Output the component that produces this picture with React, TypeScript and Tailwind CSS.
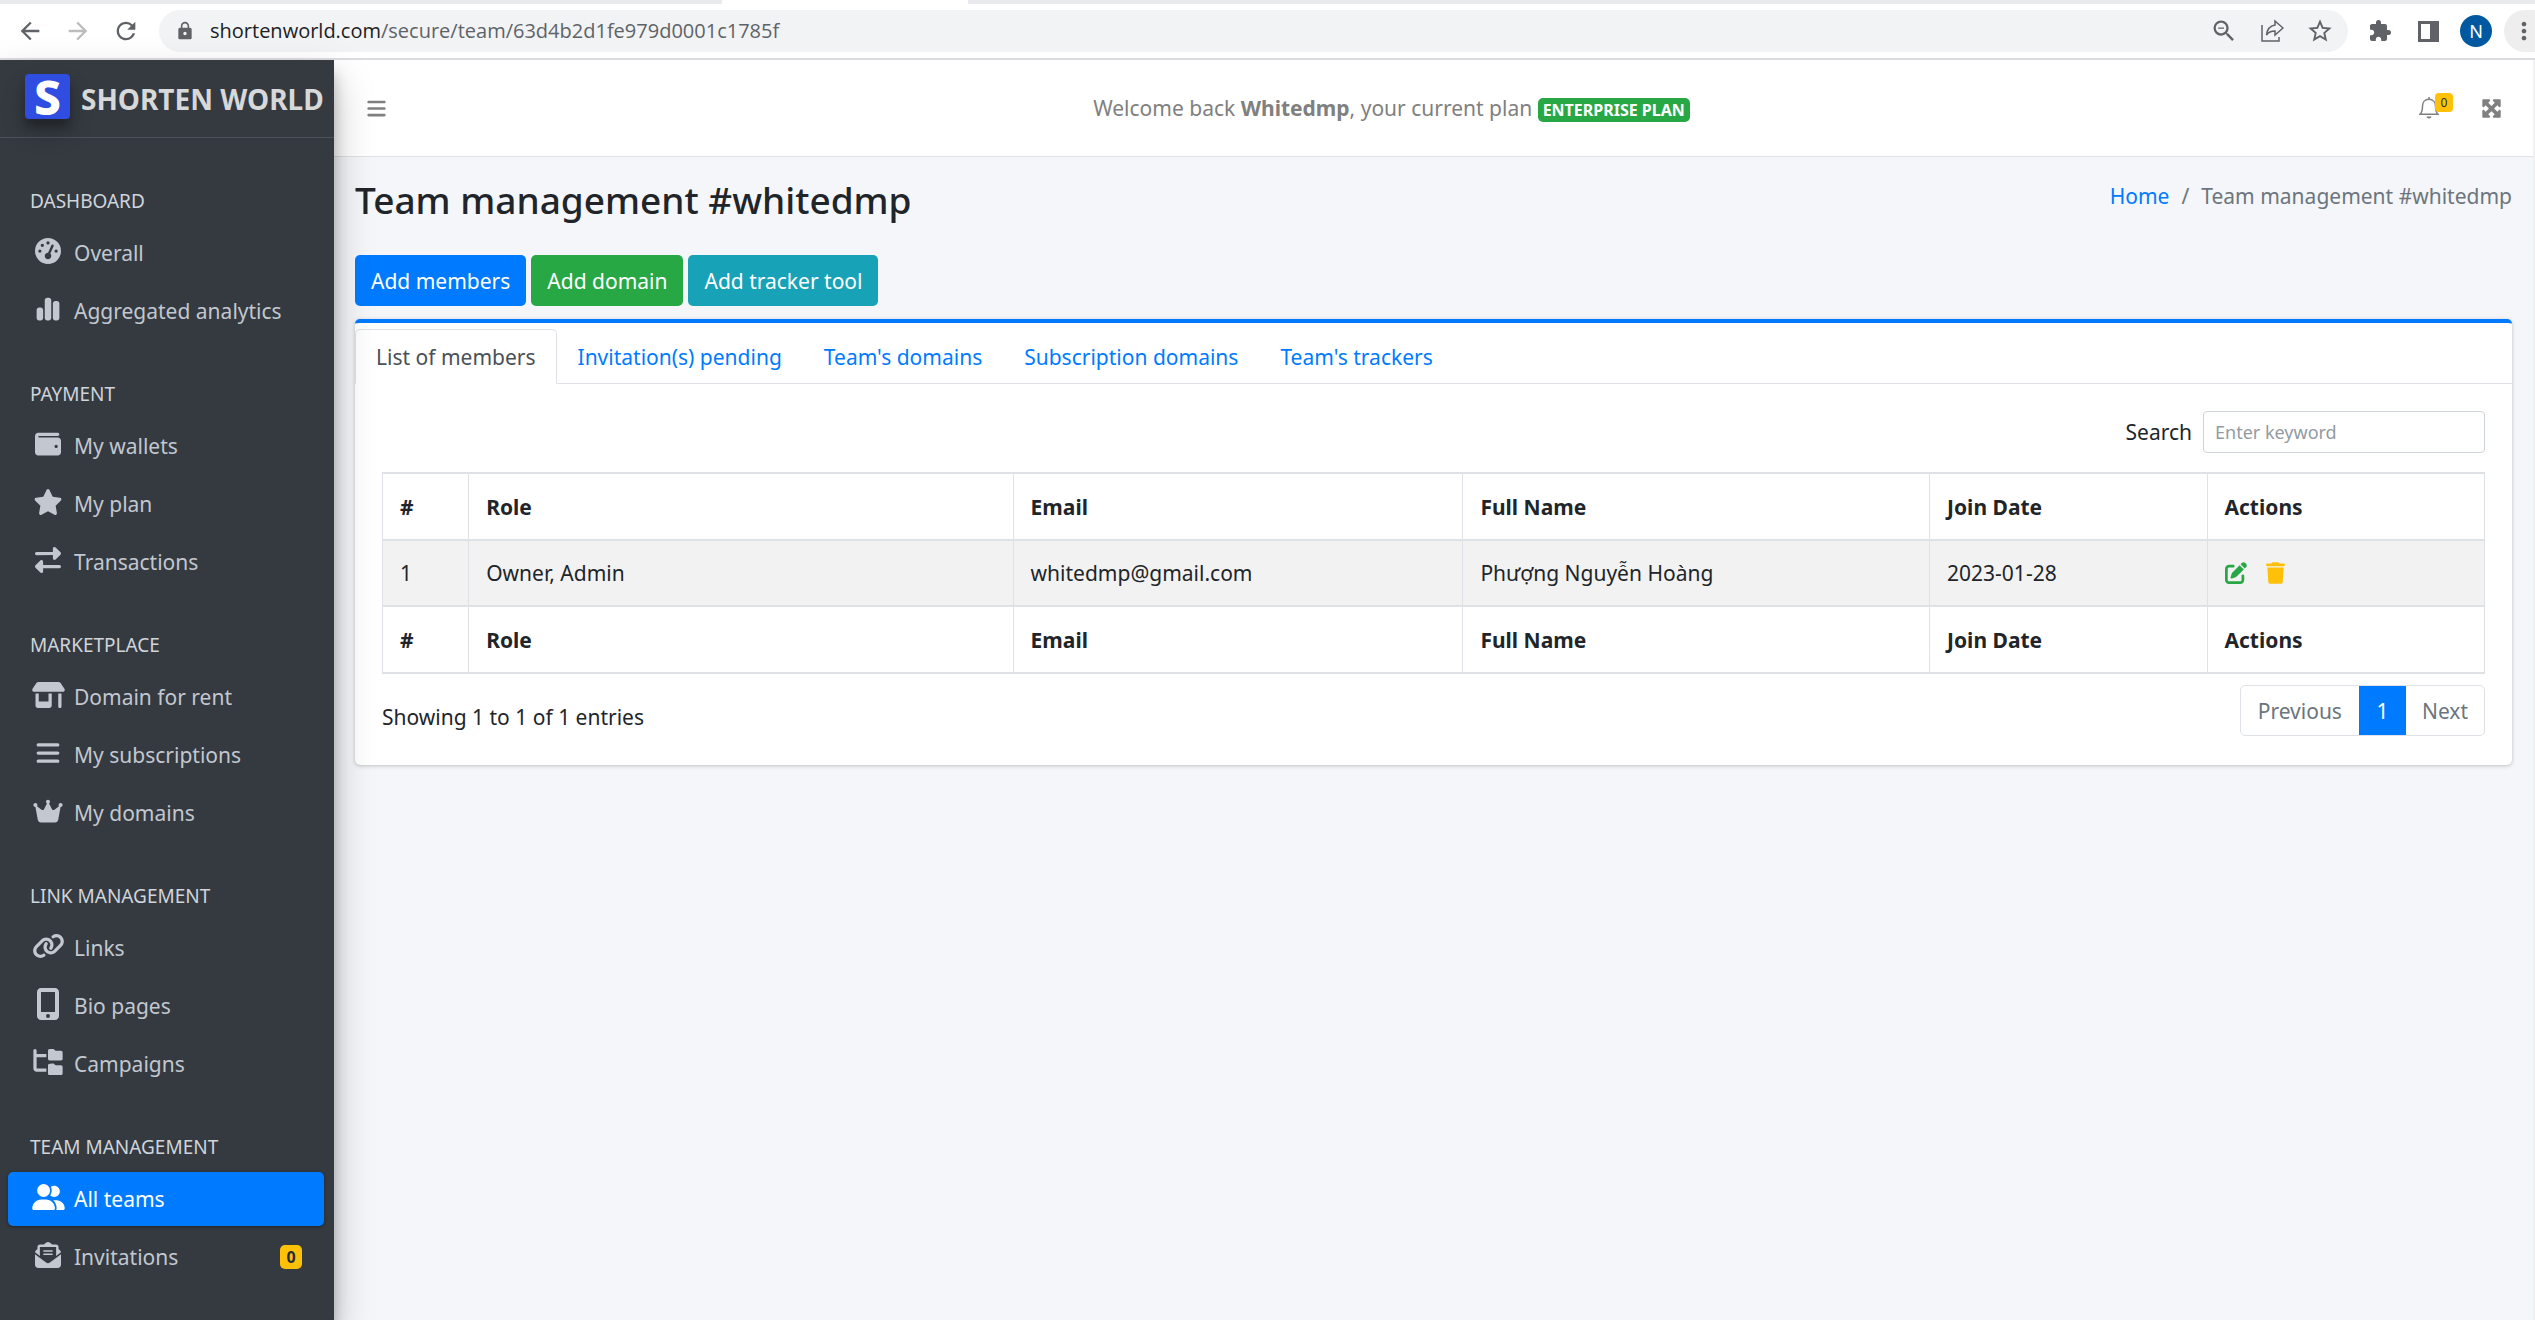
import type { ComponentType, ReactNode } from "react";
import {
  FaBars,
  FaChartSimple,
  FaCrown,
  FaEnvelopeOpenText,
  FaFolderTree,
  FaGaugeHigh,
  FaLink,
  FaMaximize,
  FaMobileScreenButton,
  FaPenToSquare,
  FaRightLeft,
  FaShop,
  FaStar,
  FaTrash,
  FaUserGroup,
  FaWallet,
} from "react-icons/fa6";
import {
  MdArrowBack,
  MdArrowForward,
  MdExtension,
  MdLock,
  MdMoreVert,
  MdRefresh,
  MdStarBorder,
  MdZoomOut,
} from "react-icons/md";

type Icon = ComponentType<{ className?: string }>;
type Item = { label: string; icon: Icon; size?: string; active?: boolean; badge?: string };

const WIDE = "h-[26px] w-[33px]";
const MEDIUM = "h-[26px] w-[30px]";

const NAV: { title: string; items: Item[] }[] = [
  {
    title: "DASHBOARD",
    items: [
      { label: "Overall", icon: FaGaugeHigh },
      { label: "Aggregated analytics", icon: FaChartSimple },
    ],
  },
  {
    title: "PAYMENT",
    items: [
      { label: "My wallets", icon: FaWallet },
      { label: "My plan", icon: FaStar, size: MEDIUM },
      { label: "Transactions", icon: FaRightLeft },
    ],
  },
  {
    title: "MARKETPLACE",
    items: [
      { label: "Domain for rent", icon: FaShop, size: WIDE },
      { label: "My subscriptions", icon: FaBars },
      { label: "My domains", icon: FaCrown, size: MEDIUM },
    ],
  },
  {
    title: "LINK MANAGEMENT",
    items: [
      { label: "Links", icon: FaLink, size: WIDE },
      { label: "Bio pages", icon: FaMobileScreenButton, size: "size-8" },
      { label: "Campaigns", icon: FaFolderTree, size: MEDIUM },
    ],
  },
  {
    title: "TEAM MANAGEMENT",
    items: [
      { label: "All teams", icon: FaUserGroup, size: WIDE, active: true },
      { label: "Invitations", icon: FaEnvelopeOpenText, badge: "0" },
    ],
  },
];

const TABS = ["List of members", "Invitation(s) pending", "Team's domains", "Subscription domains", "Team's trackers"];
const COLUMNS = ["#", "Role", "Email", "Full Name", "Join Date", "Actions"];
const MEMBERS = [
  { id: 1, role: "Owner, Admin", email: "whitedmp@gmail.com", name: "Phượng Nguyễn Hoàng", joined: "2023-01-28" },
];

function ToolButton({ label, className = "", children }: { label: string; className?: string; children: ReactNode }) {
  return (
    <button type="button" aria-label={label} className={`flex size-8 items-center justify-center ${className}`}>
      {children}
    </button>
  );
}

function BrowserBar() {
  return (
    <div className="shrink-0 border-b-2 border-[#dadce0] bg-white text-[#5f6368]">
      <div className="flex h-1 bg-[#e8eaed]">
        <div className="ml-[28.5%] w-[9.7%] bg-white" />
      </div>
      <div className="flex h-[54px] items-center pl-3.5">
        <div className="flex w-[145px] items-center gap-4">
          <ToolButton label="Back"><MdArrowBack className="size-7" /></ToolButton>
          <ToolButton label="Forward" className="text-[#babcbe]"><MdArrowForward className="size-7" /></ToolButton>
          <ToolButton label="Reload"><MdRefresh className="size-7" /></ToolButton>
        </div>
        <div className="flex h-[42px] flex-1 items-center rounded-full bg-[#f1f3f4] pl-4 pr-3">
          <MdLock className="size-5" />
          <span className="ml-[15px] flex-1 font-['Open_Sans',sans-serif] text-[20px] leading-none">
            <span className="text-[#202124]">shortenworld.com</span>/secure/team/63d4b2d1fe979d0001c1785f
          </span>
          <div className="flex gap-4">
            <ToolButton label="Zoom"><MdZoomOut className="size-7" /></ToolButton>
            <ToolButton label="Share">
              <svg viewBox="0 0 24 24" className="size-6" fill="none" stroke="currentColor" strokeWidth="1.5">
                <path d="M2 6v16h17v-4" />
                <path d="M15 2l8 7-8 7v-4c-4 0-6.500 1-8.500 4 .500-5 3-9 8.500-10z" />
              </svg>
            </ToolButton>
            <ToolButton label="Bookmark"><MdStarBorder className="size-7" /></ToolButton>
          </div>
        </div>
        <div className="flex items-center gap-4 pl-4">
          <ToolButton label="Extensions"><MdExtension className="size-6" /></ToolButton>
          <ToolButton label="Side panel">
            <span className="flex size-[21px] border-[3px] border-r-[9px] border-current" />
          </ToolButton>
          <ToolButton label="Profile">
            <span className="flex size-8 items-center justify-center rounded-full bg-[#0059a0] font-['Noto_Sans',sans-serif] text-[18px] text-white">
              N
            </span>
          </ToolButton>
        </div>
        <button type="button" aria-label="Menu" className="ml-3 flex h-[42px] w-[31px] items-center justify-center rounded-l-full bg-[#eeeeee]">
          <MdMoreVert className="ml-2 size-7 shrink-0" />
        </button>
      </div>
    </div>
  );
}

function Sidebar() {
  return (
    <aside className="z-10 w-[334px] shrink-0 bg-[#343a40] shadow-[0_19px_37px_rgba(0,0,0,0.25),0_13px_13px_rgba(0,0,0,0.22)]">
      <a href="#home" className="flex h-[78px] items-center gap-[11px] whitespace-nowrap border-b border-[#4b545c] pl-[25px] text-[28px] font-bold text-[#d6d8d9]">
        <span className="-mt-1 flex h-[45px] w-[45px] shrink-0 items-center justify-center rounded bg-[#2f4de0] text-[48px] font-extrabold leading-none text-white shadow-[0_13px_25px_rgba(0,0,0,0.19),0_8px_8px_rgba(0,0,0,0.23)]">
          S
        </span>
        SHORTEN WORLD
      </a>
      <nav className="pt-[11px]">
        {NAV.map((group) => (
          <section key={group.title}>
            <h2 className="pb-[9px] pl-[30px] pt-9 text-[19px] leading-8 text-[#d0d4db]">{group.title}</h2>
            <ul>
              {group.items.map((item) => (
                <li key={item.label} className="mb-1 px-2">
                  <a
                    href="#nav"
                    className={`mr-0.5 flex h-[54px] items-center rounded-[5px] pl-[23px] pr-[22px] ${
                      item.active
                        ? "bg-[#007bff] text-white shadow-[0_1px_4px_rgba(0,0,0,0.12),0_1px_3px_rgba(0,0,0,0.24)]"
                        : "text-[#c2c7d0]"
                    }`}
                  >
                    <span className="mb-1 flex w-[34px] shrink-0 justify-center">
                      <item.icon className={item.size ?? "size-[26px]"} />
                    </span>
                    <span className="ml-[9px] flex-1">{item.label}</span>
                    {item.badge && (
                      <span className="flex h-6 w-[22px] items-center justify-center rounded-[5px] bg-[#ffc107] text-[16px] font-bold text-[#1f2d3d]">
                        {item.badge}
                      </span>
                    )}
                  </a>
                </li>
              ))}
            </ul>
          </section>
        ))}
      </nav>
    </aside>
  );
}

function TopBar() {
  return (
    <header className="flex h-[97px] items-center border-b border-[#dee2e6] bg-white text-[#808080]">
      <button type="button" aria-label="Toggle menu" className="flex w-[66px] justify-end pr-[13px]">
        <FaBars className="size-[21px]" />
      </button>
      <p className="flex-1 text-center">
        Welcome back <b>Whitedmp</b>, your current plan{" "}
        <span className="inline-block rounded-[5px] bg-[#28a745] px-[5px] text-[16px] font-bold leading-6 text-white">
          ENTERPRISE PLAN
        </span>
      </p>
      <div className="flex w-[150px] items-center gap-[42px] pl-9">
        <button type="button" aria-label="Notifications" className="relative">
          <svg viewBox="0 0 20 22" className="h-[22px] w-5" fill="none" stroke="currentColor" strokeWidth="1.5">
            <path d="M10 0v2.500M1 17.300h18c-2-2-2.500-4-2.500-8 0-4-2.500-7-6.500-7s-6.500 3-6.500 7c0 4-.500 6-2.500 8z" />
            <path d="M7.500 19.500h5a2.500 2 0 0 1-5 0z" fill="currentColor" stroke="none" />
          </svg>
          <span className="absolute -top-1 left-4 flex h-[19px] w-[18px] items-center justify-center rounded bg-[#ffc107] text-[12px] text-[#1f2d3d]">
            0
          </span>
        </button>
        <button type="button" aria-label="Fullscreen">
          <FaMaximize className="size-[21px]" />
        </button>
      </div>
    </header>
  );
}

function HeadCells() {
  return (
    <tr className="h-[67px] border-y-2 border-[#dee2e6]">
      {COLUMNS.map((c) => (
        <th key={c} scope="col" className="border-x border-[#dee2e6] px-[17px] text-left font-bold">
          {c}
        </th>
      ))}
    </tr>
  );
}

function MembersTable() {
  const cell = "border-x border-[#dee2e6] px-[17px]";
  return (
    <table className="mt-[19px] w-full table-fixed border-collapse">
      <colgroup>
        <col className="w-[4.1%]" />
        <col className="w-[25.9%]" />
        <col className="w-[21.4%]" />
        <col className="w-[22.2%]" />
        <col className="w-[13.2%]" />
        <col className="w-[13.2%]" />
      </colgroup>
      <thead>
        <HeadCells />
      </thead>
      <tbody>
        {MEMBERS.map((m) => (
          <tr key={m.id} className="h-[66px] bg-[#f2f2f2]">
            <td className={cell}>{m.id}</td>
            <td className={cell}>{m.role}</td>
            <td className={cell}>{m.email}</td>
            <td className={cell}>{m.name}</td>
            <td className={cell}>{m.joined}</td>
            <td className={cell}>
              <div className="flex items-center gap-[19px]">
                <button type="button" aria-label="Edit member" className="text-[#28a745]">
                  <FaPenToSquare className="size-[22px]" />
                </button>
                <button type="button" aria-label="Remove member" className="text-[#ffc107]">
                  <FaTrash className="h-[22px] w-[19px]" />
                </button>
              </div>
            </td>
          </tr>
        ))}
      </tbody>
      <tfoot>
        <HeadCells />
      </tfoot>
    </table>
  );
}

export default function App() {
  return (
    <div className="flex min-h-screen flex-col bg-[#f4f6f9] font-['Noto_Sans',sans-serif] text-[21px] leading-8 text-[#212529]">
      <BrowserBar />
      <div className="flex flex-1 border-r-2 border-[#f1f1f1]">
        <Sidebar />
        <div className="min-w-0 flex-1">
          <TopBar />
          <main className="px-[21px] pt-[19px]">
            <div className="flex items-start justify-between">
              <h1 className="text-[37px] font-medium leading-[48px]">Team management #whitedmp</h1>
              <nav aria-label="Breadcrumb" className="flex gap-3 pt-1 text-[#6c757d]">
                <a href="#home" className="text-[#007bff]">Home</a>
                <span>/</span>
                <span>Team management #whitedmp</span>
              </nav>
            </div>
            <div className="mt-[31px] flex gap-[5px] text-white">
              <button type="button" className="h-[51px] rounded-[5px] bg-[#007bff] px-4">Add members</button>
              <button type="button" className="h-[51px] rounded-[5px] bg-[#28a745] px-4">Add domain</button>
              <button type="button" className="h-[51px] rounded-[5px] bg-[#17a2b8] px-4">Add tracker tool</button>
            </div>
            <section className="mt-[13px] rounded-[5px] border-t-4 border-[#007bff] bg-white pt-1.5 shadow-[0_0_1px_rgba(0,0,0,0.13),0_1px_4px_rgba(0,0,0,0.2)]">
              <div role="tablist" className="flex border-b border-[#dee2e6]">
                {TABS.map((tab, i) => (
                  <button
                    key={tab}
                    type="button"
                    role="tab"
                    aria-selected={i === 0}
                    className={`-mb-px h-[55px] rounded-t-[5px] border px-5 ${
                      i === 0 ? "border-[#dee2e6] border-b-white bg-white text-[#495057]" : "border-transparent text-[#007bff]"
                    }`}
                  >
                    {tab}
                  </button>
                ))}
              </div>
              <div className="px-[27px] pb-[29px] pt-[27px]">
                <div className="flex items-center justify-end gap-[11px]">
                  <label htmlFor="search">Search</label>
                  <input
                    id="search"
                    type="text"
                    placeholder="Enter keyword"
                    className="h-[42px] w-[282px] rounded border border-[#ced4da] bg-white px-[11px] text-[18px] placeholder:text-[#939ba2]"
                  />
                </div>
                <MembersTable />
                <div className="mt-[11px] flex items-start justify-between">
                  <p className="pt-4">Showing 1 to 1 of 1 entries</p>
                  <div className="flex h-[51px] overflow-hidden rounded-[5px] border border-[#dee2e6] text-[#6c757d]">
                    <button type="button" className="px-[17px]">Previous</button>
                    <button type="button" className="-my-px w-[47px] bg-[#007bff] text-white">1</button>
                    <button type="button" className="px-4">Next</button>
                  </div>
                </div>
              </div>
            </section>
          </main>
        </div>
      </div>
    </div>
  );
}
